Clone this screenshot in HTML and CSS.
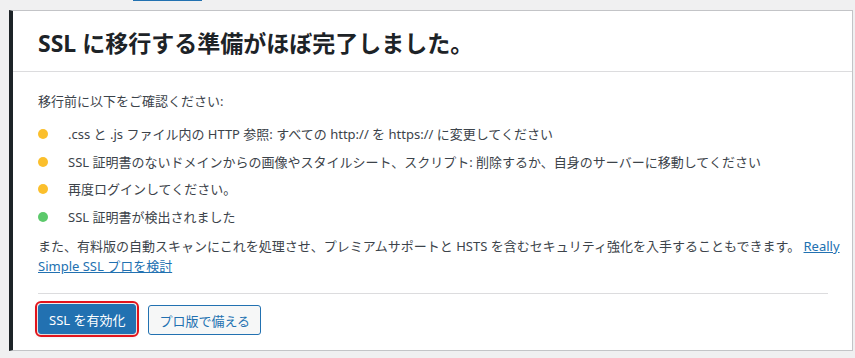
FILE: index.html
```html
<!DOCTYPE html>
<html lang="ja">
<head>
    <meta charset="UTF-8">
    <meta name="viewport" content="width=device-width, initial-scale=1.0">
    <title>SSL に移行</title>
    <link rel="stylesheet" href="styles.css">
</head>
<body>
    <div class="tab-stub"></div>

    <div class="notice">
        <div class="notice-header">
            <h1>SSL に移行する準備がほぼ完了しました。</h1>
        </div>

        <div class="notice-body">
            <p class="intro">移行前に以下をご確認ください:</p>
            <ul class="checks">
                <li><span class="dot warn"></span>.css と .js ファイル内の HTTP 参照: すべての http:// を https:// に変更してください</li>
                <li><span class="dot warn"></span>SSL 証明書のないドメインからの画像やスタイルシート、スクリプト: 削除するか、自身のサーバーに移動してください</li>
                <li><span class="dot warn"></span>再度ログインしてください。</li>
                <li><span class="dot ok"></span>SSL 証明書が検出されました</li>
            </ul>
            <p class="upsell">また、有料版の自動スキャンにこれを処理させ、プレミアムサポートと HSTS を含むセキュリティ強化を入手することもできます。 <a href="#">Really Simple SSL プロを検討</a></p>
        </div>

        <div class="notice-footer">
            <button class="button primary">SSL を有効化</button>
            <button class="button secondary">プロ版で備える</button>
        </div>
    </div>
</body>
</html>
```

FILE: styles.css
```css
body {
    margin: 0;
    background-color: #f0f0f1;
    font-family: "Noto Sans", "Noto Sans CJK JP", sans-serif;
    font-size: 13px;
    color: #3c434a;
}

.tab-stub {
    width: 69px;
    height: 1px;
    margin-left: 133px;
    background-color: #2271b1;
}

.notice {
    margin: 9px 2px 0 9px;
    background-color: #fff;
    border: 1px solid #c3c4c7;
    border-left: 4px solid #1d2327;
}

.notice-header {
    padding: 17px 25px 13px;
    border-bottom: 1px solid #dcdcde;
}

.notice-header h1 {
    margin: 0;
    font-size: 23px;
    line-height: 30px;
    font-weight: 700;
    color: #1d2327;
}

.notice-body {
    padding: 19px 10px 0 25px;
}

.intro {
    margin: 0;
    line-height: 20px;
}

.checks {
    list-style: none;
    margin: 13px 0 0;
    padding: 0;
    display: flex;
    flex-direction: column;
    gap: 7.7px;
}

.checks li {
    display: flex;
    align-items: center;
    line-height: 20px;
}

.dot {
    width: 10px;
    height: 10px;
    border-radius: 50%;
    margin: 0 20px 0 0;
    flex-shrink: 0;
}

.dot.warn {
    background-color: #fbbf2c;
}

.dot.ok {
    background-color: #5cc96b;
}

.upsell {
    margin: 9px 0 0;
    line-height: 20px;
}

.upsell a {
    color: #2271b1;
    text-decoration: underline;
}

.notice-footer {
    margin: 17px 24px 0 25px;
    padding: 10px 0 15px;
    border-top: 1px solid #dcdcde;
    display: flex;
    gap: 12px;
}

.button {
    height: 30px;
    padding: 0 10px;
    font-family: inherit;
    font-size: 13px;
    border-radius: 3px;
    border: 1px solid #2271b1;
    cursor: pointer;
}

.button.primary {
    background-color: #2271b1;
    color: #fff;
    outline: 2px solid #e2141c;
    outline-offset: 1px;
    box-shadow: 0 1px 5px rgba(0, 0, 0, 0.25);
}

.button.secondary {
    background-color: #f6f7f7;
    color: #2271b1;
    margin-top: 1px;
}
```
